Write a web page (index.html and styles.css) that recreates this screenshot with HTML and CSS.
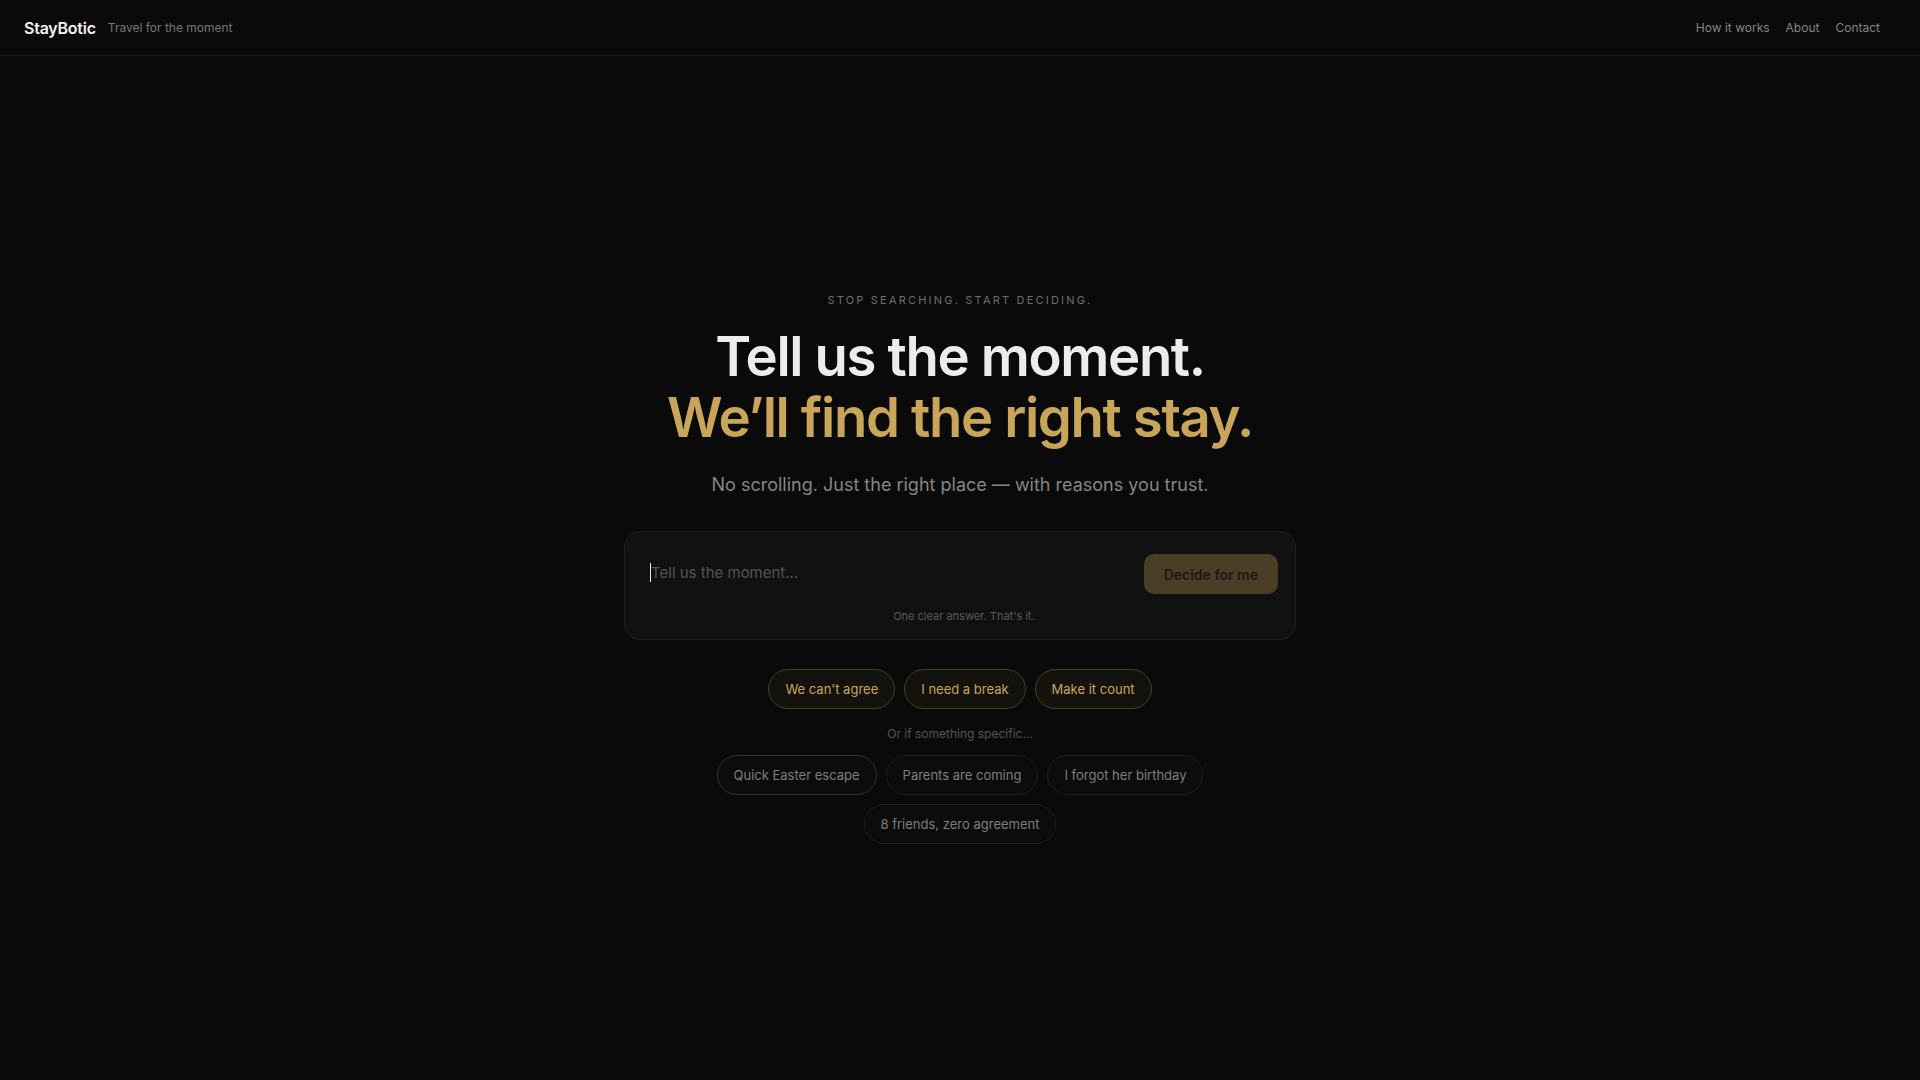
FILE: index.html
```html
<!DOCTYPE html>
<html lang="en">
<head>
  <meta charset="UTF-8" />
  <meta name="viewport" content="width=device-width, initial-scale=1.0"/>
  <title>StayBotic — Travel for the moment</title>
  <link rel="stylesheet" href="styles.css">
</head>
<body>
  <header class="topbar">
    <div class="brand">
      <span class="logo">StayBotic</span>
      <span class="tagline">Travel for the moment</span>
    </div>
    <nav class="nav">
      <a href="#">How it works</a>
      <a href="#">About</a>
      <a href="#">Contact</a>
    </nav>
  </header>

  <main class="hero">
    <p class="eyebrow">Stop searching. Start deciding.</p>
    <h1 class="title">
      <span class="title-light">Tell us the moment.</span>
      <span class="title-gold">We’ll find the right stay.</span>
    </h1>
    <p class="subtitle">No scrolling. Just the right place — with reasons you trust.</p>

    <form class="ask-card" onsubmit="return false">
      <div class="ask-row">
        <div class="ask-field">
          <input class="ask-input" type="text" placeholder="Tell us the moment...">
        </div>
        <button class="ask-button" type="submit">Decide for me</button>
      </div>
      <p class="ask-hint">One clear answer. That's it.</p>
    </form>

    <div class="chips chips-top">
      <button class="chip chip-gold">We can't agree</button>
      <button class="chip chip-gold">I need a break</button>
      <button class="chip chip-gold">Make it count</button>
    </div>

    <p class="chips-label">Or if something specific...</p>

    <div class="chips">
      <button class="chip chip-plain chip-active">Quick Easter escape</button>
      <button class="chip chip-plain">Parents are coming</button>
      <button class="chip chip-plain">I forgot her birthday</button>
      <button class="chip chip-plain">8 friends, zero agreement</button>
    </div>
  </main>
</body>
</html>
```

FILE: styles.css
```css
* {
  box-sizing: border-box;
  margin: 0;
  padding: 0;
}

body {
  background: #0a0a0a;
  color: #ededed;
  font-family: Inter, "Noto Sans", sans-serif;
  min-height: 100vh;
}

/* Top bar */
.topbar {
  height: 56px;
  display: flex;
  align-items: center;
  justify-content: space-between;
  padding: 0 40px 0 24px;
  border-bottom: 1px solid #1c1c1c;
}

.brand {
  display: flex;
  align-items: center;
  gap: 12px;
}

.logo {
  font-size: 16px;
  font-weight: 600;
  color: #f2f2f2;
  letter-spacing: -0.015em;
}

.tagline {
  font-size: 12px;
  color: #767676;
}

.nav {
  display: flex;
  gap: 16px;
}

.nav a {
  font-size: 12px;
  color: #858585;
  text-decoration: none;
}

/* Hero */
.hero {
  min-height: calc(100vh - 56px);
  display: flex;
  flex-direction: column;
  align-items: center;
  justify-content: center;
  text-align: center;
}

.eyebrow {
  font-size: 11px;
  line-height: 16px;
  letter-spacing: 0.2em;
  text-transform: uppercase;
  color: #6e6e6e;
  margin-bottom: 18px;
}

.title {
  font-size: 54.5px;
  line-height: 61px;
  font-weight: 600;
  letter-spacing: -0.025em;
}

.title span {
  display: block;
}

.title-light {
  color: #ececec;
}

.title-gold {
  color: #c9a55a;
}

.subtitle {
  margin-top: 23px;
  font-size: 18px;
  line-height: 28px;
  color: #858585;
}

/* Ask card */
.ask-card {
  width: 672px;
  margin-top: 32px;
  padding: 22px 17px 16px 25px;
  background: #111111;
  border: 1px solid #202020;
  border-radius: 16px;
  box-shadow: 0 0 24px rgba(255, 255, 255, 0.015);
}

.ask-row {
  display: flex;
  align-items: center;
  gap: 16px;
}

.ask-field {
  flex: 1;
  position: relative;
  margin-top: -4px;
}

.ask-field::before {
  content: "";
  position: absolute;
  left: 0;
  top: 50%;
  width: 1px;
  height: 19px;
  margin-top: -9px;
  background: #eeeeee;
}

.ask-input {
  width: 100%;
  background: transparent;
  border: none;
  outline: none;
  font-family: inherit;
  font-size: 15px;
  color: #e0e0e0;
  padding-left: 1px;
}

.ask-input::placeholder {
  color: #545454;
}

.ask-button {
  height: 40px;
  padding: 0 20px;
  border: none;
  border-radius: 10px;
  background: #4a3e27;
  color: #1b1a17;
  font-family: inherit;
  font-size: 14px;
  font-weight: 600;
  cursor: pointer;
}

.ask-hint {
  margin-top: 15px;
  font-size: 11px;
  line-height: 14px;
  color: #5a5a5a;
}

/* Chips */
.chips {
  max-width: 672px;
  display: flex;
  flex-wrap: wrap;
  justify-content: center;
  gap: 9px;
}

.chips-top {
  margin-top: 29px;
}

.chip {
  height: 40px;
  padding: 0 16px;
  border-radius: 999px;
  font-family: inherit;
  font-size: 13px;
  cursor: pointer;
}

.chip-gold {
  background: #14120d;
  border: 1px solid #4a3d22;
  color: #c9a55a;
}

.chip-plain {
  background: #0c0c0c;
  border: 1px solid #1e1e1e;
  color: #7e7e7e;
}

.chip-active {
  border-color: #3a301c;
}

.chips-label {
  margin: 17px 0 13px;
  font-size: 12px;
  line-height: 16px;
  color: #555555;
}
```
